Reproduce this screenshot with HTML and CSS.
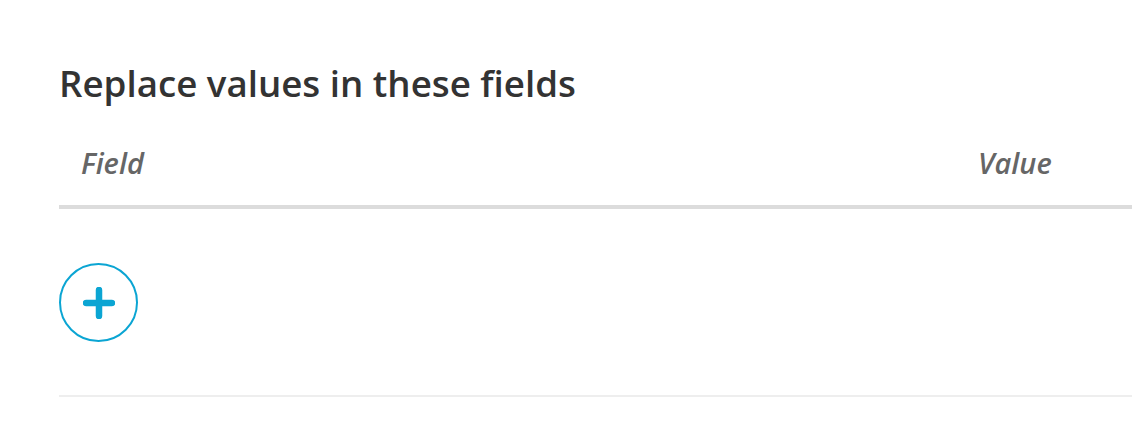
FILE: index.html
```html
<!DOCTYPE html>
<html lang="en">
<head>
	<meta charset="UTF-8">
	<title>Replace values</title>
	<link rel="stylesheet" href="styles.css">
</head>
<body>
	<div class="panel">
		<h2 class="title">Replace values in these fields</h2>
		<div class="table-head">
			<div class="col-field">Field</div>
			<div class="col-value">Value</div>
		</div>
		<div class="rows">
			<button class="add-btn" type="button" aria-label="Add">
				<svg width="32" height="32" viewBox="0 0 32 32">
					<path d="M16 3v26M3 16h26" stroke="#0ba5d3" stroke-width="6.5" stroke-linecap="round" fill="none"/>
				</svg>
			</button>
		</div>
	</div>
</body>
</html>
```

FILE: styles.css
```css
*{
	margin: 0;
	padding: 0;
	box-sizing: border-box;
}
body{
	background: #fff;
	font-family: "Open Sans", "Liberation Sans", sans-serif;
	color: #333;
}
.panel{
	padding: 57px 0 0 59px;
}
.title{
	font-size: 36.7px;
	font-weight: 600;
	color: #333;
	line-height: 52px;
}
.table-head{
	display: flex;
	margin-top: 34px;
	height: 66px;
	border-bottom: 4px solid #dcdcdc;
	font-size: 29px;
	line-height: 40px;
	font-style: italic;
	font-weight: 600;
	color: #666;
}
.col-field{
	padding-left: 22px;
	flex: 1;
}
.col-value{
	width: 154px;
}
.rows{
	padding: 54px 0 53px;
	border-bottom: 2px solid #eee;
}
.add-btn{
	display: flex;
	justify-content: center;
	align-items: center;
	width: 79px;
	height: 79px;
	border: 2px solid #0ba5d3;
	border-radius: 50%;
	background: #fff;
	cursor: pointer;
}
.add-btn svg{
	width: 32px;
	height: 32px;
}
```
